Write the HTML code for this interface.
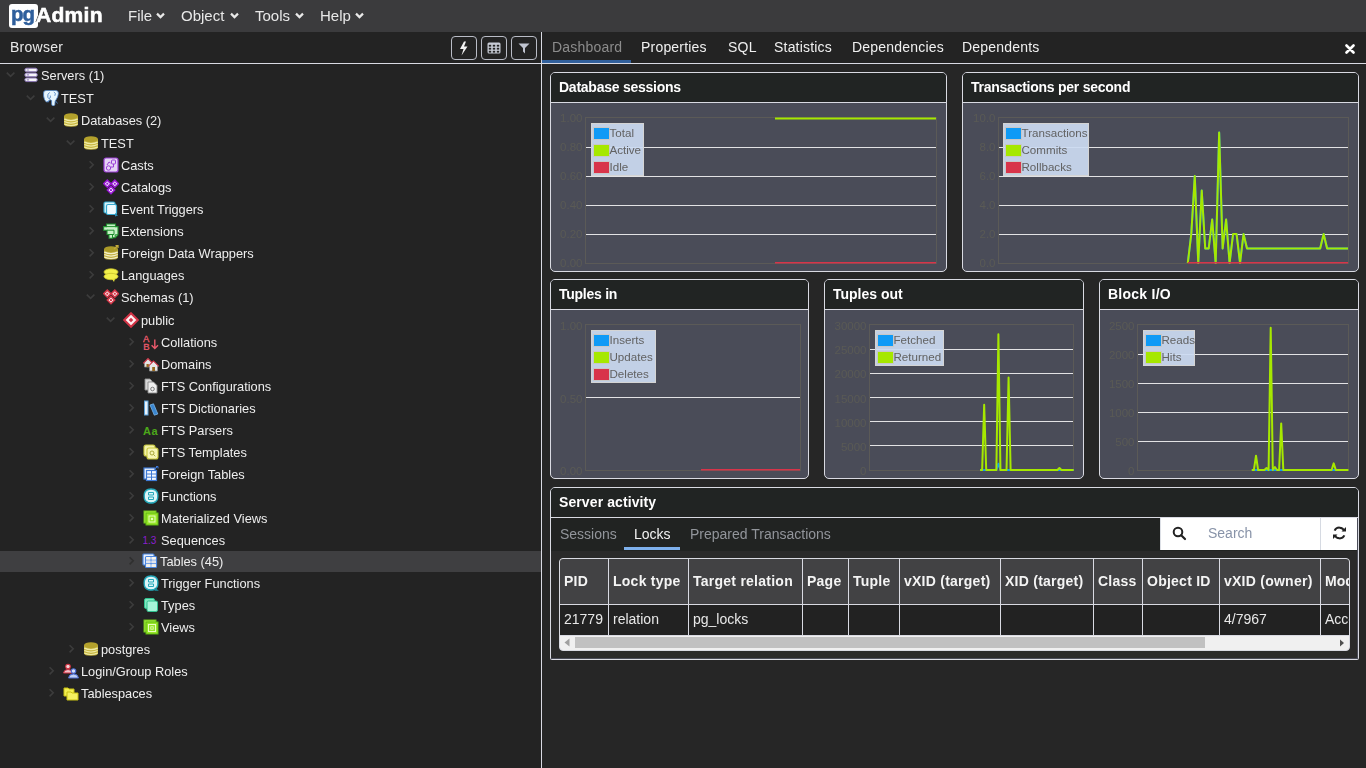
<!DOCTYPE html><html><head><meta charset="utf-8"><style>
*{box-sizing:border-box}
html,body{margin:0;padding:0;width:1366px;height:768px;overflow:hidden;background:#232323;font-family:"Liberation Sans",sans-serif}
.abs{position:absolute}
.t{position:absolute;white-space:nowrap;line-height:1;will-change:transform}
</style></head><body>
<div class="abs" style="left:0;top:0;width:1366px;height:32px;background:#3b3b3d"></div><div class="abs" style="left:9px;top:4px;width:29px;height:24px;background:#fff;border-radius:3px"></div><div class="t" style="left:11px;top:4px;font-size:20.5px;font-weight:700;color:#2f5f9c;letter-spacing:-1px;-webkit-text-stroke:0.5px #2f5f9c">pg</div><div class="t" style="left:36px;top:4px;font-size:21px;font-weight:700;color:#fff;letter-spacing:0.3px;-webkit-text-stroke:0.6px #fff;text-shadow:-1px 0 0 #333">Admin</div><div class="t" style="left:128px;top:8px;font-size:15px;color:#e8e8e8">File</div><svg class="abs" style="left:156px;top:12px" width="9" height="7" viewBox="0 0 9 7"><path d="M1 1.6 L4.5 5.1 L8 1.6" fill="none" stroke="#e8e8e8" stroke-width="2.2"/></svg><div class="t" style="left:181px;top:8px;font-size:15px;color:#e8e8e8">Object</div><svg class="abs" style="left:229.5px;top:12px" width="9" height="7" viewBox="0 0 9 7"><path d="M1 1.6 L4.5 5.1 L8 1.6" fill="none" stroke="#e8e8e8" stroke-width="2.2"/></svg><div class="t" style="left:255px;top:8px;font-size:15px;color:#e8e8e8">Tools</div><svg class="abs" style="left:294.5px;top:12px" width="9" height="7" viewBox="0 0 9 7"><path d="M1 1.6 L4.5 5.1 L8 1.6" fill="none" stroke="#e8e8e8" stroke-width="2.2"/></svg><div class="t" style="left:320px;top:8px;font-size:15px;color:#e8e8e8">Help</div><svg class="abs" style="left:355px;top:12px" width="9" height="7" viewBox="0 0 9 7"><path d="M1 1.6 L4.5 5.1 L8 1.6" fill="none" stroke="#e8e8e8" stroke-width="2.2"/></svg><div class="t" style="left:10px;top:40px;font-size:14px;letter-spacing:0.25px;color:#e8e8e8">Browser</div><div class="abs" style="left:0;top:63px;width:541px;height:1px;background:#d9dae3"></div><div class="abs" style="left:541px;top:32px;width:1px;height:736px;background:#d9dae3"></div><div class="abs" style="left:451px;top:36px;width:26px;height:24px;border:1px solid #b9bcc6;border-radius:4px"></div><div class="abs" style="left:481px;top:36px;width:26px;height:24px;border:1px solid #b9bcc6;border-radius:4px"></div><div class="abs" style="left:511px;top:36px;width:26px;height:24px;border:1px solid #b9bcc6;border-radius:4px"></div><svg class="abs" style="left:458px;top:41px" width="12" height="15" viewBox="0 0 12 15"><path d="M6 0.5 L2 8 L5.5 8 L3.5 14.5 L9.5 5.5 L6 5.5 L8 0.5 Z" fill="#f2f2f2"/></svg><svg class="abs" style="left:487px;top:42px" width="14" height="12" viewBox="0 0 14 12"><rect x="0.5" y="0.5" width="13" height="11" rx="1.5" fill="#c8ccd6"/><rect x="1.8" y="2.8" width="2.4" height="1.8" fill="#222"/><rect x="1.8" y="5.8" width="2.4" height="1.8" fill="#222"/><rect x="1.8" y="8.8" width="2.4" height="1.8" fill="#222"/><rect x="5.8" y="2.8" width="2.4" height="1.8" fill="#222"/><rect x="5.8" y="5.8" width="2.4" height="1.8" fill="#222"/><rect x="5.8" y="8.8" width="2.4" height="1.8" fill="#222"/><rect x="9.8" y="2.8" width="2.4" height="1.8" fill="#222"/><rect x="9.8" y="5.8" width="2.4" height="1.8" fill="#222"/><rect x="9.8" y="8.8" width="2.4" height="1.8" fill="#222"/></svg><svg class="abs" style="left:518px;top:43px" width="12" height="11" viewBox="0 0 12 11"><path d="M0.5 0.5 L11.5 0.5 L7 5 L7 10.5 L5 8.5 L5 5 Z" fill="#c0c4d0"/></svg><div class="abs" style="left:542px;top:60px;width:89px;height:3px;background:#31609c"></div><div class="abs" style="left:542px;top:63px;width:824px;height:1px;background:#d9dae3"></div><div class="t" style="left:552px;top:40px;font-size:14px;letter-spacing:0.2px;color:#8c8c8c">Dashboard</div><div class="t" style="left:641px;top:40px;font-size:14px;letter-spacing:0.2px;color:#f0f0f0">Properties</div><div class="t" style="left:728px;top:40px;font-size:14px;letter-spacing:0.2px;color:#f0f0f0">SQL</div><div class="t" style="left:774px;top:40px;font-size:14px;letter-spacing:0.2px;color:#f0f0f0">Statistics</div><div class="t" style="left:852px;top:40px;font-size:14px;letter-spacing:0.2px;color:#f0f0f0">Dependencies</div><div class="t" style="left:962px;top:40px;font-size:14px;letter-spacing:0.2px;color:#f0f0f0">Dependents</div><svg class="abs" style="left:1345px;top:44px" width="10" height="10" viewBox="0 0 10 10"><path d="M1.5 1.5 L8.5 8.5 M8.5 1.5 L1.5 8.5" stroke="#fff" stroke-width="2.6" stroke-linecap="round"/></svg><div class="abs" style="left:542px;top:64px;width:824px;height:704px;background:#262626"></div><svg class="abs" style="left:6px;top:71.2px" width="10" height="8" viewBox="0 0 10 8"><path d="M0.8 1.6 L4.6 5.4 L8.4 1.6" fill="none" stroke="#3c3c3c" stroke-width="1.6"/></svg><svg class="abs" style="left:23px;top:67px" width="16" height="16" viewBox="0 0 16 16"><rect x="1.8" y="1.2" width="12.5" height="3.6" rx="1.8" fill="#f6f6f8" stroke="#8a76b6" stroke-width="1"/><rect x="3.6" y="2.4" width="2.6" height="1.2" rx="0.6" fill="#9a8ac0"/><rect x="1.8" y="6.1000000000000005" width="12.5" height="3.6" rx="1.8" fill="#f6f6f8" stroke="#8a76b6" stroke-width="1"/><rect x="3.6" y="7.300000000000001" width="2.6" height="1.2" rx="0.6" fill="#9a8ac0"/><rect x="1.8" y="11.0" width="12.5" height="3.6" rx="1.8" fill="#f6f6f8" stroke="#8a76b6" stroke-width="1"/><rect x="3.6" y="12.200000000000001" width="2.6" height="1.2" rx="0.6" fill="#9a8ac0"/></svg><div class="t" style="left:41px;top:69.6px;font-size:12.8px;color:#eeeeee">Servers (1)</div><svg class="abs" style="left:26px;top:94.2px" width="10" height="8" viewBox="0 0 10 8"><path d="M0.8 1.6 L4.6 5.4 L8.4 1.6" fill="none" stroke="#3c3c3c" stroke-width="1.6"/></svg><svg class="abs" style="left:43px;top:90px" width="16" height="16" viewBox="0 0 16 16"><path d="M0.6 3 Q0.2 0.4 3.5 0.4 L12.5 0.4 Q15.6 0.4 15.4 3.5 Q15.2 7 12.8 10.2 L12.2 11 Q11.9 13 11.9 14.5 Q11.6 15.9 10.2 15.9 Q8.6 15.9 8.6 14 L8.6 10.5 Q7.5 10.2 6.9 9.5 Q5.5 12.2 3.6 11.9 Q1.2 11 0.6 6 Z" fill="#e6f5fd" stroke="#4a7fc2" stroke-width="0.8"/><path d="M6.8 2.5 Q4 3.5 4.8 7.2 Q5.5 9.2 7 8.2 Q7.8 7 7.2 5.5 M10.8 2 Q13.5 3 11.8 5.8 M12.5 10.8 L14.5 13.5 M6.5 10 L5 12.5" stroke="#4a7fc2" stroke-width="0.85" fill="none"/></svg><div class="t" style="left:61px;top:92.6px;font-size:12.8px;color:#eeeeee">TEST</div><svg class="abs" style="left:46px;top:116.2px" width="10" height="8" viewBox="0 0 10 8"><path d="M0.8 1.6 L4.6 5.4 L8.4 1.6" fill="none" stroke="#3c3c3c" stroke-width="1.6"/></svg><svg class="abs" style="left:63px;top:112px" width="16" height="16" viewBox="0 0 16 16"><path d="M1 4 L1 12.3 Q1 14.8 8 14.8 Q15 14.8 15 12.3 L15 4 Z" fill="#c6b53e"/><ellipse cx="8" cy="4.2" rx="7" ry="3" fill="#b3a12c"/><path d="M1.3 7.1 Q8 10.2 14.7 7.1" stroke="#efeaa6" stroke-width="1.2" fill="none"/><path d="M1.3 9.5 Q8 12.6 14.7 9.5" stroke="#efeaa6" stroke-width="1.2" fill="none"/><path d="M1.3 11.9 Q8 15 14.7 11.9" stroke="#efeaa6" stroke-width="1.1" fill="none"/></svg><div class="t" style="left:81px;top:114.6px;font-size:12.8px;color:#eeeeee">Databases (2)</div><svg class="abs" style="left:66px;top:139.20000000000002px" width="10" height="8" viewBox="0 0 10 8"><path d="M0.8 1.6 L4.6 5.4 L8.4 1.6" fill="none" stroke="#3c3c3c" stroke-width="1.6"/></svg><svg class="abs" style="left:83px;top:135px" width="16" height="16" viewBox="0 0 16 16"><path d="M1 4 L1 12.3 Q1 14.8 8 14.8 Q15 14.8 15 12.3 L15 4 Z" fill="#c6b53e"/><ellipse cx="8" cy="4.2" rx="7" ry="3" fill="#b3a12c"/><path d="M1.3 7.1 Q8 10.2 14.7 7.1" stroke="#efeaa6" stroke-width="1.2" fill="none"/><path d="M1.3 9.5 Q8 12.6 14.7 9.5" stroke="#efeaa6" stroke-width="1.2" fill="none"/><path d="M1.3 11.9 Q8 15 14.7 11.9" stroke="#efeaa6" stroke-width="1.1" fill="none"/></svg><div class="t" style="left:101px;top:137.6px;font-size:12.8px;color:#eeeeee">TEST</div><svg class="abs" style="left:88px;top:160.0px" width="8" height="10" viewBox="0 0 8 10"><path d="M1.6 1.2 L5.2 4.8 L1.6 8.4" fill="none" stroke="#3c3c3c" stroke-width="1.6"/></svg><svg class="abs" style="left:103px;top:157px" width="16" height="16" viewBox="0 0 16 16"><rect x="1" y="1" width="14" height="14" rx="2" fill="#e5d3f5" stroke="#9b3fd6" stroke-width="1.2"/><rect x="8.5" y="3" width="4" height="4" rx="1" fill="none" stroke="#9b3fd6" stroke-width="1"/><circle cx="5.5" cy="11" r="2.2" fill="none" stroke="#9b3fd6" stroke-width="1"/><path d="M10.5 7 L10.5 10 L8 10 M4 8 L6 5 L7.5 6" stroke="#9b3fd6" stroke-width="1" fill="none"/></svg><div class="t" style="left:121px;top:159.6px;font-size:12.8px;color:#eeeeee">Casts</div><svg class="abs" style="left:88px;top:182.0px" width="8" height="10" viewBox="0 0 8 10"><path d="M1.6 1.2 L5.2 4.8 L1.6 8.4" fill="none" stroke="#3c3c3c" stroke-width="1.6"/></svg><svg class="abs" style="left:103px;top:179px" width="16" height="16" viewBox="0 0 16 16"><path d="M4.3 1.1 L7.9 4.7 L4.3 8.3 L0.6999999999999997 4.7 Z" fill="#f4e6ff" stroke="#9614d2" stroke-width="1.5"/><rect x="3.3499999999999996" y="3.75" width="1.9" height="1.9" fill="#9614d2"/><path d="M11.8 1.1 L15.4 4.7 L11.8 8.3 L8.200000000000001 4.7 Z" fill="#f4e6ff" stroke="#9614d2" stroke-width="1.5"/><rect x="10.850000000000001" y="3.75" width="1.9" height="1.9" fill="#9614d2"/><path d="M8 7.3999999999999995 L11.7 11.1 L8 14.8 L4.3 11.1 Z" fill="#f4e6ff" stroke="#9614d2" stroke-width="1.5"/><rect x="7.05" y="10.15" width="1.9" height="1.9" fill="#9614d2"/></svg><div class="t" style="left:121px;top:181.6px;font-size:12.8px;color:#eeeeee">Catalogs</div><svg class="abs" style="left:88px;top:204.0px" width="8" height="10" viewBox="0 0 8 10"><path d="M1.6 1.2 L5.2 4.8 L1.6 8.4" fill="none" stroke="#3c3c3c" stroke-width="1.6"/></svg><svg class="abs" style="left:103px;top:201px" width="16" height="16" viewBox="0 0 16 16"><rect x="1" y="1" width="11" height="11" rx="1.5" fill="#d8f4fb" stroke="#36a9cf" stroke-width="1.2"/><rect x="3.5" y="3.5" width="10" height="10" rx="1.5" fill="#eefbff" stroke="#36a9cf" stroke-width="1.2"/><path d="M12 12 L15 14.5 L12 15.5 Z" fill="#2a8fb8"/></svg><div class="t" style="left:121px;top:203.6px;font-size:12.8px;color:#eeeeee">Event Triggers</div><svg class="abs" style="left:88px;top:226.0px" width="8" height="10" viewBox="0 0 8 10"><path d="M1.6 1.2 L5.2 4.8 L1.6 8.4" fill="none" stroke="#3c3c3c" stroke-width="1.6"/></svg><svg class="abs" style="left:103px;top:223px" width="16" height="16" viewBox="0 0 16 16"><path d="M3.5 1 L12.5 1 L12.5 3.6 L15 3.6 L15 11.8 L12.2 14.8 L9.5 14.8 L9.5 15.3 L6 15.3 L6 11.5 L4 11.5 L4 7.2 L0.6 7.2 L0.6 3.6 L3.5 3.6 Z" fill="#c8f1c8" stroke="#1f8f2e" stroke-width="1.1"/><path d="M3.5 3.6 L12.5 3.6 M4 7.2 L11 7.2 L11 11.5 L6 11.5 M9.5 11.5 L9.5 14.8 M12.2 14.8 L12.2 11.8 L15 11.8" stroke="#1f8f2e" stroke-width="1" fill="none"/></svg><div class="t" style="left:121px;top:225.6px;font-size:12.8px;color:#eeeeee">Extensions</div><svg class="abs" style="left:88px;top:248.0px" width="8" height="10" viewBox="0 0 8 10"><path d="M1.6 1.2 L5.2 4.8 L1.6 8.4" fill="none" stroke="#3c3c3c" stroke-width="1.6"/></svg><svg class="abs" style="left:103px;top:245px" width="16" height="16" viewBox="0 0 16 16"><path d="M1 4 L1 12.3 Q1 14.8 8 14.8 Q15 14.8 15 12.3 L15 4 Z" fill="#c0ae3e"/><ellipse cx="8" cy="4.2" rx="7" ry="3" fill="#ab9a28"/><path d="M1.3 7.1 Q8 10.2 14.7 7.1" stroke="#f4f0c8" stroke-width="1.2" fill="none"/><path d="M1.3 9.5 Q8 12.6 14.7 9.5" stroke="#f4f0c8" stroke-width="1.2" fill="none"/><path d="M1.3 11.9 Q8 15 14.7 11.9" stroke="#f4f0c8" stroke-width="1.1" fill="none"/><path d="M11 4 L15 0.5 M12.5 0.5 L15 0.5 L15 3" stroke="#c0a83a" stroke-width="1.3" fill="none"/></svg><div class="t" style="left:121px;top:247.6px;font-size:12.8px;color:#eeeeee">Foreign Data Wrappers</div><svg class="abs" style="left:88px;top:270.0px" width="8" height="10" viewBox="0 0 8 10"><path d="M1.6 1.2 L5.2 4.8 L1.6 8.4" fill="none" stroke="#3c3c3c" stroke-width="1.6"/></svg><svg class="abs" style="left:103px;top:267px" width="16" height="16" viewBox="0 0 16 16"><ellipse cx="8" cy="5" rx="7" ry="3.2" fill="#f2f04a" stroke="#c8c22a" stroke-width="0.8"/><ellipse cx="8" cy="9.5" rx="7" ry="3.2" fill="#f2f04a" stroke="#c8c22a" stroke-width="0.8"/><path d="M9 12 L11 15 L12 11.5 Z" fill="#e6e23a"/></svg><div class="t" style="left:121px;top:269.6px;font-size:12.8px;color:#eeeeee">Languages</div><svg class="abs" style="left:86px;top:293.2px" width="10" height="8" viewBox="0 0 10 8"><path d="M0.8 1.6 L4.6 5.4 L8.4 1.6" fill="none" stroke="#3c3c3c" stroke-width="1.6"/></svg><svg class="abs" style="left:103px;top:289px" width="16" height="16" viewBox="0 0 16 16"><path d="M4.3 1.1 L7.9 4.7 L4.3 8.3 L0.6999999999999997 4.7 Z" fill="#fde8ea" stroke="#d23446" stroke-width="1.5"/><rect x="3.3499999999999996" y="3.75" width="1.9" height="1.9" fill="#d23446"/><path d="M11.8 1.1 L15.4 4.7 L11.8 8.3 L8.200000000000001 4.7 Z" fill="#fde8ea" stroke="#d23446" stroke-width="1.5"/><rect x="10.850000000000001" y="3.75" width="1.9" height="1.9" fill="#d23446"/><path d="M8 7.3999999999999995 L11.7 11.1 L8 14.8 L4.3 11.1 Z" fill="#fde8ea" stroke="#d23446" stroke-width="1.5"/><rect x="7.05" y="10.15" width="1.9" height="1.9" fill="#d23446"/></svg><div class="t" style="left:121px;top:291.6px;font-size:12.8px;color:#eeeeee">Schemas (1)</div><svg class="abs" style="left:106px;top:316.2px" width="10" height="8" viewBox="0 0 10 8"><path d="M0.8 1.6 L4.6 5.4 L8.4 1.6" fill="none" stroke="#3c3c3c" stroke-width="1.6"/></svg><svg class="abs" style="left:123px;top:312px" width="16" height="16" viewBox="0 0 16 16"><path d="M8 1.2 L14.8 8 L8 14.8 L1.2 8 Z" fill="#fff0f2" stroke="#d23446" stroke-width="2"/><rect x="6.4" y="6.4" width="3.2" height="3.2" fill="#d23446" transform="rotate(45 8 8)"/></svg><div class="t" style="left:141px;top:314.6px;font-size:12.8px;color:#eeeeee">public</div><svg class="abs" style="left:128px;top:337.0px" width="8" height="10" viewBox="0 0 8 10"><path d="M1.6 1.2 L5.2 4.8 L1.6 8.4" fill="none" stroke="#3c3c3c" stroke-width="1.6"/></svg><svg class="abs" style="left:143px;top:334px" width="16" height="16" viewBox="0 0 16 16"><text x="0" y="8" font-family="Liberation Sans" font-size="9.5" fill="#ea5a6c" stroke="#ea5a6c" stroke-width="0.3">A</text><text x="0.3" y="16" font-family="Liberation Sans" font-size="9.5" fill="#ea5a6c" stroke="#ea5a6c" stroke-width="0.3">B</text><path d="M11.8 5.5 L11.8 14.5 M8.6 11.2 L11.8 14.5 L15 11.2" stroke="#ea5a6c" stroke-width="1.4" fill="none"/></svg><div class="t" style="left:161px;top:336.6px;font-size:12.8px;color:#eeeeee">Collations</div><svg class="abs" style="left:128px;top:359.0px" width="8" height="10" viewBox="0 0 8 10"><path d="M1.6 1.2 L5.2 4.8 L1.6 8.4" fill="none" stroke="#3c3c3c" stroke-width="1.6"/></svg><svg class="abs" style="left:143px;top:356px" width="16" height="16" viewBox="0 0 16 16"><path d="M1.5 7 L1.5 11 L8.5 11 L8.5 7" fill="#e4e4e4" stroke="#8a8a8a" stroke-width="0.8"/><path d="M0.3 7.3 L5 2.5 L9.7 7.3" fill="#e4e4e4" stroke="#cc3344" stroke-width="1.1"/><path d="M6.5 10 L6.5 15 L14.5 15 L14.5 10" fill="#e8e8e8" stroke="#8a8a8a" stroke-width="0.8"/><path d="M5.3 10.3 L10.5 5 L15.7 10.3" fill="#e8e8e8" stroke="#cc3344" stroke-width="1.2"/><path d="M6.5 10 L10.5 6 L14.5 10 Z" fill="#e8e8e8"/><rect x="9.2" y="11" width="2.8" height="4" fill="#9a6a20"/><rect x="3.5" y="8" width="2.3" height="3" fill="#9a6a20"/></svg><div class="t" style="left:161px;top:358.6px;font-size:12.8px;color:#eeeeee">Domains</div><svg class="abs" style="left:128px;top:381.0px" width="8" height="10" viewBox="0 0 8 10"><path d="M1.6 1.2 L5.2 4.8 L1.6 8.4" fill="none" stroke="#3c3c3c" stroke-width="1.6"/></svg><svg class="abs" style="left:143px;top:378px" width="16" height="16" viewBox="0 0 16 16"><path d="M2 1 L7 1 L9 3 L9 12 L2 12 Z" fill="#d8d8d8" stroke="#909090" stroke-width="0.9"/><path d="M5 4 L10.5 4 L14 7.5 L14 15 L5 15 Z" fill="#eeeeee" stroke="#8a8a8a" stroke-width="0.9"/><circle cx="9.5" cy="11" r="1.8" fill="none" stroke="#707070" stroke-width="0.9"/></svg><div class="t" style="left:161px;top:380.6px;font-size:12.8px;color:#eeeeee">FTS Configurations</div><svg class="abs" style="left:128px;top:403.0px" width="8" height="10" viewBox="0 0 8 10"><path d="M1.6 1.2 L5.2 4.8 L1.6 8.4" fill="none" stroke="#3c3c3c" stroke-width="1.6"/></svg><svg class="abs" style="left:143px;top:400px" width="16" height="16" viewBox="0 0 16 16"><rect x="1.5" y="1" width="3.5" height="14" fill="#e8f2fb" stroke="#5aa0d8" stroke-width="1"/><path d="M7 5 L10.5 3.8 L14.8 14 L11.3 15.2 Z" fill="#3a86d0" stroke="#7ab6ea" stroke-width="0.8"/></svg><div class="t" style="left:161px;top:402.6px;font-size:12.8px;color:#eeeeee">FTS Dictionaries</div><svg class="abs" style="left:128px;top:425.0px" width="8" height="10" viewBox="0 0 8 10"><path d="M1.6 1.2 L5.2 4.8 L1.6 8.4" fill="none" stroke="#3c3c3c" stroke-width="1.6"/></svg><svg class="abs" style="left:143px;top:422px" width="16" height="16" viewBox="0 0 16 16"><text x="0" y="12.5" font-family="Liberation Sans" font-weight="bold" font-size="11" letter-spacing="0.6" fill="#4ca81a">Aa</text></svg><div class="t" style="left:161px;top:424.6px;font-size:12.8px;color:#eeeeee">FTS Parsers</div><svg class="abs" style="left:128px;top:447.0px" width="8" height="10" viewBox="0 0 8 10"><path d="M1.6 1.2 L5.2 4.8 L1.6 8.4" fill="none" stroke="#3c3c3c" stroke-width="1.6"/></svg><svg class="abs" style="left:143px;top:444px" width="16" height="16" viewBox="0 0 16 16"><rect x="1" y="1" width="11" height="11" rx="2" fill="#f3f2a8" stroke="#c8c83c" stroke-width="1.1"/><rect x="4" y="4" width="11" height="11" rx="2" fill="#f6f5b6" stroke="#c8c83c" stroke-width="1.1"/><circle cx="9" cy="9" r="2" fill="none" stroke="#a0a030" stroke-width="0.9"/><path d="M10.4 10.4 L12.3 12.3" stroke="#a0a030" stroke-width="0.9"/></svg><div class="t" style="left:161px;top:446.6px;font-size:12.8px;color:#eeeeee">FTS Templates</div><svg class="abs" style="left:128px;top:469.0px" width="8" height="10" viewBox="0 0 8 10"><path d="M1.6 1.2 L5.2 4.8 L1.6 8.4" fill="none" stroke="#3c3c3c" stroke-width="1.6"/></svg><svg class="abs" style="left:143px;top:466px" width="16" height="16" viewBox="0 0 16 16"><rect x="1" y="2" width="11" height="11" fill="#eef4fc" stroke="#3f7ad6" stroke-width="1.2"/><rect x="3.5" y="4.5" width="10" height="10" fill="#f4f8fe" stroke="#3f7ad6" stroke-width="1.2"/><path d="M3.5 8 L13.5 8 M3.5 11.2 L13.5 11.2 M8.5 4.5 L8.5 14.5" stroke="#3f7ad6" stroke-width="1"/><path d="M11.5 3 L15 0.5 M13 0.5 L15 0.5 L15 2.5" stroke="#3f7ad6" stroke-width="1"/></svg><div class="t" style="left:161px;top:468.6px;font-size:12.8px;color:#eeeeee">Foreign Tables</div><svg class="abs" style="left:128px;top:491.0px" width="8" height="10" viewBox="0 0 8 10"><path d="M1.6 1.2 L5.2 4.8 L1.6 8.4" fill="none" stroke="#3c3c3c" stroke-width="1.6"/></svg><svg class="abs" style="left:143px;top:488px" width="16" height="16" viewBox="0 0 16 16"><path d="M5 1.5 Q8 0.5 11 1.5 Q15 3 14.8 8 Q15 13 11 14.5 Q8 15.5 5 14.5 Q1 13 1.2 8 Q1 3 5 1.5 Z" fill="#dcf5f8" stroke="#25a9bb" stroke-width="1.4"/><path d="M5.5 4.5 L10.5 4.5 L10.5 7 L5.5 7 Z M5.5 9 L10.5 9 L10.5 11.5 L5.5 11.5 Z" fill="none" stroke="#25a9bb" stroke-width="1"/></svg><div class="t" style="left:161px;top:490.6px;font-size:12.8px;color:#eeeeee">Functions</div><svg class="abs" style="left:128px;top:513.0px" width="8" height="10" viewBox="0 0 8 10"><path d="M1.6 1.2 L5.2 4.8 L1.6 8.4" fill="none" stroke="#3c3c3c" stroke-width="1.6"/></svg><svg class="abs" style="left:143px;top:510px" width="16" height="16" viewBox="0 0 16 16"><rect x="1" y="1" width="12" height="12" fill="#a6ec3a" stroke="#6fc21a" stroke-width="1"/><rect x="3" y="3" width="12" height="12" fill="#98e42a" stroke="#5cb80e" stroke-width="1"/><rect x="6" y="6" width="6" height="6" fill="none" stroke="#e8ffc0" stroke-width="1"/><circle cx="9" cy="9" r="1.2" fill="#e8ffc0"/></svg><div class="t" style="left:161px;top:512.6px;font-size:12.8px;color:#eeeeee">Materialized Views</div><svg class="abs" style="left:128px;top:535.0px" width="8" height="10" viewBox="0 0 8 10"><path d="M1.6 1.2 L5.2 4.8 L1.6 8.4" fill="none" stroke="#3c3c3c" stroke-width="1.6"/></svg><svg class="abs" style="left:143px;top:532px" width="16" height="16" viewBox="0 0 16 16"><text x="-0.5" y="12" font-family="Liberation Sans" font-size="10" fill="#8a1fd0">1.3</text></svg><div class="t" style="left:161px;top:534.6px;font-size:12.8px;color:#eeeeee">Sequences</div><div class="abs" style="left:0;top:551px;width:541px;height:21px;background:#3f3f41"></div><svg class="abs" style="left:128px;top:556.0px" width="8" height="10" viewBox="0 0 8 10"><path d="M1.6 1.2 L5.2 4.8 L1.6 8.4" fill="none" stroke="#2f2f2f" stroke-width="1.6"/></svg><svg class="abs" style="left:142px;top:553px" width="16" height="16" viewBox="0 0 16 16"><rect x="1" y="1" width="11" height="11" rx="1" fill="#e8f0fc" stroke="#4a86e0" stroke-width="1.2"/><rect x="3.5" y="3.5" width="11" height="11" rx="1" fill="#f2f6fc" stroke="#4a86e0" stroke-width="1.2"/><path d="M3.5 7 L14.5 7 M3.5 10.7 L14.5 10.7 M9 3.5 L9 14.5" stroke="#4a86e0" stroke-width="1"/><rect x="4.2" y="4.2" width="4.2" height="2.3" fill="#fbf6ea"/><rect x="9.6" y="4.2" width="4.2" height="2.3" fill="#fbf6ea"/><rect x="4.2" y="7.6" width="4.2" height="2.5" fill="#e2e4ea"/><rect x="9.6" y="7.6" width="4.2" height="2.5" fill="#e2e4ea"/><rect x="4.2" y="11.3" width="4.2" height="2.6" fill="#f4f0e6"/><rect x="9.6" y="11.3" width="4.2" height="2.6" fill="#f4f0e6"/></svg><div class="t" style="left:160px;top:555.6px;font-size:12.8px;color:#eeeeee">Tables (45)</div><svg class="abs" style="left:128px;top:578.0px" width="8" height="10" viewBox="0 0 8 10"><path d="M1.6 1.2 L5.2 4.8 L1.6 8.4" fill="none" stroke="#3c3c3c" stroke-width="1.6"/></svg><svg class="abs" style="left:143px;top:575px" width="16" height="16" viewBox="0 0 16 16"><path d="M5 1.5 Q8 0.5 11 1.5 Q15 3 14.8 8 Q15 13 11 14.5 Q8 15.5 5 14.5 Q1 13 1.2 8 Q1 3 5 1.5 Z" fill="#dcf5f8" stroke="#25a9bb" stroke-width="1.4"/><path d="M5.5 4.5 L10.5 4.5 L10.5 7 L5.5 7 Z M5.5 9 L10.5 9 L10.5 11.5 L5.5 11.5 Z" fill="none" stroke="#25a9bb" stroke-width="1"/><path d="M12 12.5 L15.8 15.8 L11.5 15.8 Z" fill="#1b8d9e"/></svg><div class="t" style="left:161px;top:577.6px;font-size:12.8px;color:#eeeeee">Trigger Functions</div><svg class="abs" style="left:128px;top:600.0px" width="8" height="10" viewBox="0 0 8 10"><path d="M1.6 1.2 L5.2 4.8 L1.6 8.4" fill="none" stroke="#3c3c3c" stroke-width="1.6"/></svg><svg class="abs" style="left:143px;top:597px" width="16" height="16" viewBox="0 0 16 16"><rect x="1.5" y="1.5" width="10" height="10" rx="1.5" fill="#7fe8c0" stroke="#2fc08e" stroke-width="1"/><rect x="4" y="4" width="10.5" height="10.5" rx="1.5" fill="#a6f4d8" stroke="#2fc08e" stroke-width="1"/></svg><div class="t" style="left:161px;top:599.6px;font-size:12.8px;color:#eeeeee">Types</div><svg class="abs" style="left:128px;top:622.0px" width="8" height="10" viewBox="0 0 8 10"><path d="M1.6 1.2 L5.2 4.8 L1.6 8.4" fill="none" stroke="#3c3c3c" stroke-width="1.6"/></svg><svg class="abs" style="left:143px;top:619px" width="16" height="16" viewBox="0 0 16 16"><rect x="1" y="1" width="12" height="12" fill="#a6ec3a" stroke="#6fc21a" stroke-width="1"/><rect x="3" y="3" width="12" height="12" fill="#98e42a" stroke="#5cb80e" stroke-width="1"/><rect x="5.5" y="5.5" width="7" height="7" fill="none" stroke="#e8ffc0" stroke-width="1"/><rect x="7.8" y="7.8" width="2.4" height="2.4" fill="none" stroke="#e8ffc0" stroke-width="0.8"/></svg><div class="t" style="left:161px;top:621.6px;font-size:12.8px;color:#eeeeee">Views</div><svg class="abs" style="left:68px;top:644.0px" width="8" height="10" viewBox="0 0 8 10"><path d="M1.6 1.2 L5.2 4.8 L1.6 8.4" fill="none" stroke="#3c3c3c" stroke-width="1.6"/></svg><svg class="abs" style="left:83px;top:641px" width="16" height="16" viewBox="0 0 16 16"><path d="M1 4 L1 12.3 Q1 14.8 8 14.8 Q15 14.8 15 12.3 L15 4 Z" fill="#c6b53e"/><ellipse cx="8" cy="4.2" rx="7" ry="3" fill="#b3a12c"/><path d="M1.3 7.1 Q8 10.2 14.7 7.1" stroke="#efeaa6" stroke-width="1.2" fill="none"/><path d="M1.3 9.5 Q8 12.6 14.7 9.5" stroke="#efeaa6" stroke-width="1.2" fill="none"/><path d="M1.3 11.9 Q8 15 14.7 11.9" stroke="#efeaa6" stroke-width="1.1" fill="none"/></svg><div class="t" style="left:101px;top:643.6px;font-size:12.8px;color:#eeeeee">postgres</div><svg class="abs" style="left:48px;top:666.0px" width="8" height="10" viewBox="0 0 8 10"><path d="M1.6 1.2 L5.2 4.8 L1.6 8.4" fill="none" stroke="#3c3c3c" stroke-width="1.6"/></svg><svg class="abs" style="left:63px;top:663px" width="16" height="16" viewBox="0 0 16 16"><circle cx="5" cy="3.5" r="2.3" fill="#f4d4d8" stroke="#d03040" stroke-width="1.1"/><path d="M0.5 10 Q1 6.5 5 6.5 Q9 6.5 9.5 10 Z" fill="#f0c0c8" stroke="#d03040" stroke-width="1"/><circle cx="10.5" cy="8" r="2.3" fill="#d4e0f8" stroke="#4a6ad0" stroke-width="1.1"/><path d="M5.5 15 Q6 11 10.5 11 Q15 11 15.5 15 Z" fill="#c0d0f4" stroke="#4a6ad0" stroke-width="1"/></svg><div class="t" style="left:81px;top:665.6px;font-size:12.8px;color:#eeeeee">Login/Group Roles</div><svg class="abs" style="left:48px;top:688.0px" width="8" height="10" viewBox="0 0 8 10"><path d="M1.6 1.2 L5.2 4.8 L1.6 8.4" fill="none" stroke="#3c3c3c" stroke-width="1.6"/></svg><svg class="abs" style="left:63px;top:685px" width="16" height="16" viewBox="0 0 16 16"><path d="M1 3 L5 3 L6 4 L11 4 L11 11 L1 11 Z" fill="#f2ee50" stroke="#c8c010" stroke-width="1"/><path d="M4 7 L8 7 L9 8 L15 8 L15 15 L4 15 Z" fill="#f4f060" stroke="#c8c010" stroke-width="1"/></svg><div class="t" style="left:81px;top:687.6px;font-size:12.8px;color:#eeeeee">Tablespaces</div><div class="abs" style="left:550px;top:72px;width:397px;height:200px;border:1px solid #d9dae2;border-radius:5px;background:#4a4c58;overflow:hidden"><div class="abs" style="left:0;top:0;width:395px;height:29px;background:#212423;border-bottom:0"></div><div class="abs" style="left:0;top:29px;width:395px;height:1px;background:#d9dae2"></div></div><div class="t" style="left:559px;top:80px;font-size:14px;letter-spacing:-0.25px;font-weight:700;color:#ffffff">Database sessions</div><div class="abs" style="left:962px;top:72px;width:397px;height:200px;border:1px solid #d9dae2;border-radius:5px;background:#4a4c58;overflow:hidden"><div class="abs" style="left:0;top:0;width:395px;height:29px;background:#212423;border-bottom:0"></div><div class="abs" style="left:0;top:29px;width:395px;height:1px;background:#d9dae2"></div></div><div class="t" style="left:971px;top:80px;font-size:14px;letter-spacing:-0.25px;font-weight:700;color:#ffffff">Transactions per second</div><div class="abs" style="left:550px;top:279px;width:259px;height:200px;border:1px solid #d9dae2;border-radius:5px;background:#4a4c58;overflow:hidden"><div class="abs" style="left:0;top:0;width:257px;height:29px;background:#212423;border-bottom:0"></div><div class="abs" style="left:0;top:29px;width:257px;height:1px;background:#d9dae2"></div></div><div class="t" style="left:559px;top:287px;font-size:14px;letter-spacing:-0.25px;font-weight:700;color:#ffffff">Tuples in</div><div class="abs" style="left:824px;top:279px;width:260px;height:200px;border:1px solid #d9dae2;border-radius:5px;background:#4a4c58;overflow:hidden"><div class="abs" style="left:0;top:0;width:258px;height:29px;background:#212423;border-bottom:0"></div><div class="abs" style="left:0;top:29px;width:258px;height:1px;background:#d9dae2"></div></div><div class="t" style="left:833px;top:287px;font-size:14px;letter-spacing:0.0px;font-weight:700;color:#ffffff">Tuples out</div><div class="abs" style="left:1099px;top:279px;width:260px;height:200px;border:1px solid #d9dae2;border-radius:5px;background:#4a4c58;overflow:hidden"><div class="abs" style="left:0;top:0;width:258px;height:29px;background:#212423;border-bottom:0"></div><div class="abs" style="left:0;top:29px;width:258px;height:1px;background:#d9dae2"></div></div><div class="t" style="left:1108px;top:287px;font-size:14px;letter-spacing:0.25px;font-weight:700;color:#ffffff">Block I/O</div><svg class="abs" style="left:0;top:0" width="1366" height="768" viewBox="0 0 1366 768"><text x="582.5" y="122" text-anchor="end" font-family="Liberation Sans" font-size="11.5" fill="#5a5a55">1.00</text><text x="582.5" y="151" text-anchor="end" font-family="Liberation Sans" font-size="11.5" fill="#5a5a55">0.80</text><text x="582.5" y="180" text-anchor="end" font-family="Liberation Sans" font-size="11.5" fill="#5a5a55">0.60</text><text x="582.5" y="209" text-anchor="end" font-family="Liberation Sans" font-size="11.5" fill="#5a5a55">0.40</text><text x="582.5" y="238" text-anchor="end" font-family="Liberation Sans" font-size="11.5" fill="#5a5a55">0.20</text><text x="582.5" y="267" text-anchor="end" font-family="Liberation Sans" font-size="11.5" fill="#5a5a55">0.00</text><line x1="585" y1="147.5" x2="936" y2="147.5" stroke="#e2e2e4" stroke-width="1.1"/><line x1="585" y1="176.5" x2="936" y2="176.5" stroke="#e2e2e4" stroke-width="1.1"/><line x1="585" y1="205.5" x2="936" y2="205.5" stroke="#e2e2e4" stroke-width="1.1"/><line x1="585" y1="234.5" x2="936" y2="234.5" stroke="#e2e2e4" stroke-width="1.1"/><rect x="585.5" y="117.5" width="351" height="146" fill="none" stroke="#5b5a57" stroke-width="1"/><polyline points="775,262.8 936,262.8" fill="none" stroke="#d8344a" stroke-width="1.6" stroke-linejoin="round"/><polyline points="775,118.4 936,118.4" fill="none" stroke="#a6e800" stroke-width="2" stroke-linejoin="round"/><rect x="591.5" y="123.5" width="52" height="52" fill="#ccdbf2" fill-opacity="0.92" stroke="#d4d4d4" stroke-width="1"/><rect x="593.5" y="127.5" width="16" height="12" fill="#d0d8e4" stroke="#c8c8c8" stroke-width="1"/><rect x="594" y="128" width="15" height="11" fill="#0f9af6"/><text x="609.5" y="136.8" font-family="Liberation Sans" font-size="11.6" fill="#626262">Total</text><rect x="593.5" y="144.5" width="16" height="12" fill="#d0d8e4" stroke="#c8c8c8" stroke-width="1"/><rect x="594" y="145" width="15" height="11" fill="#a6e800"/><text x="609.5" y="153.8" font-family="Liberation Sans" font-size="11.6" fill="#626262">Active</text><rect x="593.5" y="161.5" width="16" height="12" fill="#d0d8e4" stroke="#c8c8c8" stroke-width="1"/><rect x="594" y="162" width="15" height="11" fill="#d8344a"/><text x="609.5" y="170.8" font-family="Liberation Sans" font-size="11.6" fill="#626262">Idle</text><text x="995.5" y="122" text-anchor="end" font-family="Liberation Sans" font-size="11.5" fill="#5a5a55">10.0</text><text x="995.5" y="151" text-anchor="end" font-family="Liberation Sans" font-size="11.5" fill="#5a5a55">8.0</text><text x="995.5" y="180" text-anchor="end" font-family="Liberation Sans" font-size="11.5" fill="#5a5a55">6.0</text><text x="995.5" y="209" text-anchor="end" font-family="Liberation Sans" font-size="11.5" fill="#5a5a55">4.0</text><text x="995.5" y="238" text-anchor="end" font-family="Liberation Sans" font-size="11.5" fill="#5a5a55">2.0</text><text x="995.5" y="267" text-anchor="end" font-family="Liberation Sans" font-size="11.5" fill="#5a5a55">0.0</text><line x1="998" y1="147.5" x2="1348" y2="147.5" stroke="#e2e2e4" stroke-width="1.1"/><line x1="998" y1="176.5" x2="1348" y2="176.5" stroke="#e2e2e4" stroke-width="1.1"/><line x1="998" y1="205.5" x2="1348" y2="205.5" stroke="#e2e2e4" stroke-width="1.1"/><line x1="998" y1="234.5" x2="1348" y2="234.5" stroke="#e2e2e4" stroke-width="1.1"/><rect x="998.5" y="117.5" width="350" height="146" fill="none" stroke="#5b5a57" stroke-width="1"/><polyline points="1187.8,263.0 1191.283,234.0 1194.7659999999998,176.0 1198.249,263.0 1201.732,190.5 1205.215,248.5 1208.6979999999999,248.5 1212.181,219.5 1215.664,263.0 1219.147,132.5 1222.6299999999999,248.5 1226.113,219.5 1229.596,263.0 1233.079,234.0 1236.562,234.0 1240.045,263.0 1243.528,234.0 1247.011,248.5 1250.494,248.5 1253.9769999999999,248.5 1257.46,248.5 1260.943,248.5 1264.426,248.5 1267.9089999999999,248.5 1271.392,248.5 1274.875,248.5 1278.358,248.5 1281.841,248.5 1285.324,248.5 1288.807,248.5 1292.29,248.5 1295.773,248.5 1299.2559999999999,248.5 1302.739,248.5 1306.222,248.5 1309.705,248.5 1313.1879999999999,248.5 1316.671,248.5 1320.154,248.5 1323.637,234.0 1327.12,248.5 1330.603,248.5 1334.086,248.5 1337.569,248.5 1341.052,248.5 1344.5349999999999,248.5 1348.018,248.5" fill="none" stroke="#0f9af6" stroke-width="2" stroke-linejoin="round"/><polyline points="1187.8,263.0 1191.283,234.0 1194.7659999999998,176.0 1198.249,263.0 1201.732,190.5 1205.215,248.5 1208.6979999999999,248.5 1212.181,219.5 1215.664,263.0 1219.147,132.5 1222.6299999999999,248.5 1226.113,219.5 1229.596,263.0 1233.079,234.0 1236.562,234.0 1240.045,263.0 1243.528,234.0 1247.011,248.5 1250.494,248.5 1253.9769999999999,248.5 1257.46,248.5 1260.943,248.5 1264.426,248.5 1267.9089999999999,248.5 1271.392,248.5 1274.875,248.5 1278.358,248.5 1281.841,248.5 1285.324,248.5 1288.807,248.5 1292.29,248.5 1295.773,248.5 1299.2559999999999,248.5 1302.739,248.5 1306.222,248.5 1309.705,248.5 1313.1879999999999,248.5 1316.671,248.5 1320.154,248.5 1323.637,234.0 1327.12,248.5 1330.603,248.5 1334.086,248.5 1337.569,248.5 1341.052,248.5 1344.5349999999999,248.5 1348.018,248.5" fill="none" stroke="#a6e800" stroke-width="2" stroke-linejoin="round"/><polyline points="1187.8,262.8 1348,262.8" fill="none" stroke="#d8344a" stroke-width="1.6" stroke-linejoin="round"/><rect x="1003.5" y="123.5" width="85" height="52" fill="#ccdbf2" fill-opacity="0.92" stroke="#d4d4d4" stroke-width="1"/><rect x="1005.5" y="127.5" width="16" height="12" fill="#d0d8e4" stroke="#c8c8c8" stroke-width="1"/><rect x="1006" y="128" width="15" height="11" fill="#0f9af6"/><text x="1021.5" y="136.8" font-family="Liberation Sans" font-size="11.6" fill="#626262">Transactions</text><rect x="1005.5" y="144.5" width="16" height="12" fill="#d0d8e4" stroke="#c8c8c8" stroke-width="1"/><rect x="1006" y="145" width="15" height="11" fill="#a6e800"/><text x="1021.5" y="153.8" font-family="Liberation Sans" font-size="11.6" fill="#626262">Commits</text><rect x="1005.5" y="161.5" width="16" height="12" fill="#d0d8e4" stroke="#c8c8c8" stroke-width="1"/><rect x="1006" y="162" width="15" height="11" fill="#d8344a"/><text x="1021.5" y="170.8" font-family="Liberation Sans" font-size="11.6" fill="#626262">Rollbacks</text><text x="582.5" y="330" text-anchor="end" font-family="Liberation Sans" font-size="11.5" fill="#5a5a55">1.00</text><text x="582.5" y="402.5" text-anchor="end" font-family="Liberation Sans" font-size="11.5" fill="#5a5a55">0.50</text><text x="582.5" y="475" text-anchor="end" font-family="Liberation Sans" font-size="11.5" fill="#5a5a55">0.00</text><line x1="585" y1="397.5" x2="800" y2="397.5" stroke="#e2e2e4" stroke-width="1.1"/><rect x="585.5" y="324.5" width="215" height="146" fill="none" stroke="#5b5a57" stroke-width="1"/><polyline points="701,469.8 800,469.8" fill="none" stroke="#d8344a" stroke-width="1.6" stroke-linejoin="round"/><rect x="591.5" y="330.5" width="64" height="52" fill="#ccdbf2" fill-opacity="0.92" stroke="#d4d4d4" stroke-width="1"/><rect x="593.5" y="334.5" width="16" height="12" fill="#d0d8e4" stroke="#c8c8c8" stroke-width="1"/><rect x="594" y="335" width="15" height="11" fill="#0f9af6"/><text x="609.5" y="343.8" font-family="Liberation Sans" font-size="11.6" fill="#626262">Inserts</text><rect x="593.5" y="351.5" width="16" height="12" fill="#d0d8e4" stroke="#c8c8c8" stroke-width="1"/><rect x="594" y="352" width="15" height="11" fill="#a6e800"/><text x="609.5" y="360.8" font-family="Liberation Sans" font-size="11.6" fill="#626262">Updates</text><rect x="593.5" y="368.5" width="16" height="12" fill="#d0d8e4" stroke="#c8c8c8" stroke-width="1"/><rect x="594" y="369" width="15" height="11" fill="#d8344a"/><text x="609.5" y="377.8" font-family="Liberation Sans" font-size="11.6" fill="#626262">Deletes</text><text x="866.5" y="330" text-anchor="end" font-family="Liberation Sans" font-size="11.5" fill="#5a5a55">30000</text><text x="866.5" y="354.2" text-anchor="end" font-family="Liberation Sans" font-size="11.5" fill="#5a5a55">25000</text><text x="866.5" y="378.3" text-anchor="end" font-family="Liberation Sans" font-size="11.5" fill="#5a5a55">20000</text><text x="866.5" y="402.5" text-anchor="end" font-family="Liberation Sans" font-size="11.5" fill="#5a5a55">15000</text><text x="866.5" y="426.6" text-anchor="end" font-family="Liberation Sans" font-size="11.5" fill="#5a5a55">10000</text><text x="866.5" y="450.8" text-anchor="end" font-family="Liberation Sans" font-size="11.5" fill="#5a5a55">5000</text><text x="866.5" y="475" text-anchor="end" font-family="Liberation Sans" font-size="11.5" fill="#5a5a55">0</text><line x1="869" y1="349.5" x2="1073" y2="349.5" stroke="#e2e2e4" stroke-width="1.1"/><line x1="869" y1="373.5" x2="1073" y2="373.5" stroke="#e2e2e4" stroke-width="1.1"/><line x1="869" y1="397.5" x2="1073" y2="397.5" stroke="#e2e2e4" stroke-width="1.1"/><line x1="869" y1="421.5" x2="1073" y2="421.5" stroke="#e2e2e4" stroke-width="1.1"/><line x1="869" y1="445.5" x2="1073" y2="445.5" stroke="#e2e2e4" stroke-width="1.1"/><rect x="869.5" y="324.5" width="204" height="146" fill="none" stroke="#5b5a57" stroke-width="1"/><polyline points="980.1,470.0 982.134,470.0 984.168,470.0 986.202,470.0 988.236,470.0 990.27,470.0 992.304,470.0 994.338,470.0 996.3720000000001,470.0 998.4060000000001,463.67333333333335 1000.44,470.0 1002.474,470.0 1004.508,470.0 1006.542,470.0 1008.576,470.0 1010.61,470.0 1012.644,470.0 1014.678,470.0 1016.712,470.0 1018.746,470.0 1020.78,470.0 1022.8140000000001,470.0 1024.848,470.0 1026.882,470.0 1028.916,470.0 1030.95,470.0 1032.984,470.0 1035.018,470.0 1037.0520000000001,470.0 1039.086,470.0 1041.1200000000001,470.0 1043.154,470.0 1045.188,470.0 1047.222,470.0 1049.256,470.0 1051.29,470.0 1053.324,470.0 1055.358,470.0 1057.392,470.0 1059.426,470.0 1061.46,470.0 1063.494,470.0 1065.528,470.0 1067.562,470.0 1069.596,470.0 1071.63,470.0 1073.664,470.0" fill="none" stroke="#0f9af6" stroke-width="2" stroke-linejoin="round"/><polyline points="980.1,470.0 982.134,470.0 984.168,404.78666666666663 986.202,470.0 988.236,470.0 990.27,470.0 992.304,470.0 994.338,470.0 996.3720000000001,470.0 998.4060000000001,334.22 1000.44,470.0 1002.474,470.0 1004.508,470.0 1006.542,470.0 1008.576,377.5333333333333 1010.61,470.0 1012.644,470.0 1014.678,470.0 1016.712,470.0 1018.746,470.0 1020.78,470.0 1022.8140000000001,470.0 1024.848,470.0 1026.882,470.0 1028.916,470.0 1030.95,470.0 1032.984,470.0 1035.018,470.0 1037.0520000000001,470.0 1039.086,470.0 1041.1200000000001,470.0 1043.154,470.0 1045.188,470.0 1047.222,470.0 1049.256,470.0 1051.29,470.0 1053.324,470.0 1055.358,470.0 1057.392,470.0 1059.426,468.05333333333334 1061.46,470.0 1063.494,470.0 1065.528,470.0 1067.562,470.0 1069.596,470.0 1071.63,470.0 1073.664,470.0" fill="none" stroke="#a6e800" stroke-width="2" stroke-linejoin="round"/><rect x="875.5" y="330.5" width="68" height="35" fill="#ccdbf2" fill-opacity="0.92" stroke="#d4d4d4" stroke-width="1"/><rect x="877.5" y="334.5" width="16" height="12" fill="#d0d8e4" stroke="#c8c8c8" stroke-width="1"/><rect x="878" y="335" width="15" height="11" fill="#0f9af6"/><text x="893.5" y="343.8" font-family="Liberation Sans" font-size="11.6" fill="#626262">Fetched</text><rect x="877.5" y="351.5" width="16" height="12" fill="#d0d8e4" stroke="#c8c8c8" stroke-width="1"/><rect x="878" y="352" width="15" height="11" fill="#a6e800"/><text x="893.5" y="360.8" font-family="Liberation Sans" font-size="11.6" fill="#626262">Returned</text><text x="1134.5" y="330" text-anchor="end" font-family="Liberation Sans" font-size="11.5" fill="#5a5a55">2500</text><text x="1134.5" y="359" text-anchor="end" font-family="Liberation Sans" font-size="11.5" fill="#5a5a55">2000</text><text x="1134.5" y="388" text-anchor="end" font-family="Liberation Sans" font-size="11.5" fill="#5a5a55">1500</text><text x="1134.5" y="417" text-anchor="end" font-family="Liberation Sans" font-size="11.5" fill="#5a5a55">1000</text><text x="1134.5" y="446" text-anchor="end" font-family="Liberation Sans" font-size="11.5" fill="#5a5a55">500</text><text x="1134.5" y="475" text-anchor="end" font-family="Liberation Sans" font-size="11.5" fill="#5a5a55">0</text><line x1="1137" y1="354.5" x2="1348" y2="354.5" stroke="#e2e2e4" stroke-width="1.1"/><line x1="1137" y1="383.5" x2="1348" y2="383.5" stroke="#e2e2e4" stroke-width="1.1"/><line x1="1137" y1="412.5" x2="1348" y2="412.5" stroke="#e2e2e4" stroke-width="1.1"/><line x1="1137" y1="441.5" x2="1348" y2="441.5" stroke="#e2e2e4" stroke-width="1.1"/><rect x="1137.5" y="324.5" width="211" height="146" fill="none" stroke="#5b5a57" stroke-width="1"/><polyline points="1251.8,470 1348,470" fill="none" stroke="#0f9af6" stroke-width="2" stroke-linejoin="round"/><polyline points="1251.8,470.0 1253.8999999999999,470.0 1256.0,455.692 1258.1,470.0 1260.2,470.0 1262.3,470.0 1264.3999999999999,470.0 1266.5,468.0144 1268.6,470.0 1270.7,327.67920000000004 1272.8,470.0 1274.8999999999999,467.0216 1277.0,470.0 1279.1,470.0 1281.2,423.3968 1283.3,470.0 1285.3999999999999,470.0 1287.5,470.0 1289.6,470.0 1291.7,470.0 1293.8,470.0 1295.8999999999999,470.0 1298.0,470.0 1300.1,470.0 1302.2,470.0 1304.3,470.0 1306.3999999999999,470.0 1308.5,470.0 1310.6,470.0 1312.7,470.0 1314.8,470.0 1316.8999999999999,470.0 1319.0,470.0 1321.1,470.0 1323.2,470.0 1325.3,470.0 1327.3999999999999,470.0 1329.5,470.0 1331.6,470.0 1333.7,463.4008 1335.8,470.0 1337.8999999999999,470.0 1340.0,470.0 1342.1,470.0 1344.2,470.0 1346.3,470.0 1348.3999999999999,470.0" fill="none" stroke="#a6e800" stroke-width="2" stroke-linejoin="round"/><rect x="1143.5" y="330.5" width="51" height="35" fill="#ccdbf2" fill-opacity="0.92" stroke="#d4d4d4" stroke-width="1"/><rect x="1145.5" y="334.5" width="16" height="12" fill="#d0d8e4" stroke="#c8c8c8" stroke-width="1"/><rect x="1146" y="335" width="15" height="11" fill="#0f9af6"/><text x="1161.5" y="343.8" font-family="Liberation Sans" font-size="11.6" fill="#626262">Reads</text><rect x="1145.5" y="351.5" width="16" height="12" fill="#d0d8e4" stroke="#c8c8c8" stroke-width="1"/><rect x="1146" y="352" width="15" height="11" fill="#a6e800"/><text x="1161.5" y="360.8" font-family="Liberation Sans" font-size="11.6" fill="#626262">Hits</text></svg><div class="abs" style="left:550px;top:487px;width:809px;height:173px;border:1px solid #d9dae2;border-radius:5px 5px 1.5px 1.5px;background:#4a4c58;overflow:hidden"><div class="abs" style="left:0;top:0;width:807px;height:29px;background:#212423;border-bottom:0"></div><div class="abs" style="left:0;top:29px;width:807px;height:1px;background:#d9dae2"></div></div><div class="t" style="left:559px;top:495px;font-size:14px;letter-spacing:0.1px;font-weight:700;color:#ffffff">Server activity</div><div class="abs" style="left:551px;top:518px;width:806px;height:33px;background:#212322"></div><div class="abs" style="left:551px;top:551px;width:806px;height:107px;background:#2a2a2a;border-radius:0 0 1px 1px"></div><div class="t" style="left:560px;top:527px;font-size:14px;color:#92959b">Sessions</div><div class="t" style="left:634px;top:527px;font-size:14px;color:#f2f2f2">Locks</div><div class="t" style="left:690px;top:527px;font-size:14px;color:#92959b">Prepared Transactions</div><div class="abs" style="left:624px;top:547px;width:56px;height:3px;background:#7eb0ec"></div><div class="abs" style="left:1160px;top:518px;width:197px;height:32px;background:#ffffff;border-left:1px solid #dde0e6"></div><div class="abs" style="left:1320px;top:518px;width:1px;height:32px;background:#d6dae2"></div><svg class="abs" style="left:1172px;top:526px" width="15" height="15" viewBox="0 0 15 15"><circle cx="6" cy="6" r="4.3" fill="none" stroke="#222" stroke-width="2"/><path d="M9.2 9.2 L13 13" stroke="#222" stroke-width="2.2" stroke-linecap="round"/></svg><div class="t" style="left:1207.5px;top:526.4px;font-size:14px;color:#8893a8">Search</div><svg class="abs" style="left:1332px;top:526px" width="15" height="14" viewBox="0 0 15 14"><path d="M12.3 5 A5.3 5.3 0 0 0 2.6 4.6" fill="none" stroke="#222" stroke-width="2"/><path d="M2.7 9 A5.3 5.3 0 0 0 12.4 9.4" fill="none" stroke="#222" stroke-width="2"/><path d="M9.5 5.5 L14 5.5 L14 1 Z" fill="#222"/><path d="M5.5 8.5 L1 8.5 L1 13 Z" fill="#222"/></svg><div class="abs" style="left:559px;top:558px;width:791px;height:93px;border:1px solid #d9dae2;border-radius:4px;overflow:hidden;background:#f0f0f0"><div class="abs" style="left:0;top:0;width:789px;height:45px;background:#424244"></div><div class="abs" style="left:0;top:45px;width:789px;height:1px;background:#d9dae2"></div><div class="abs" style="left:0;top:46px;width:789px;height:30px;background:#222222"></div><div class="abs" style="left:0;top:76px;width:789px;height:1px;background:#d9dae2"></div><div class="abs" style="left:48px;top:0;width:1px;height:76px;background:#d9dae2"></div><div class="abs" style="left:128px;top:0;width:1px;height:76px;background:#d9dae2"></div><div class="abs" style="left:242px;top:0;width:1px;height:76px;background:#d9dae2"></div><div class="abs" style="left:288px;top:0;width:1px;height:76px;background:#d9dae2"></div><div class="abs" style="left:339px;top:0;width:1px;height:76px;background:#d9dae2"></div><div class="abs" style="left:440px;top:0;width:1px;height:76px;background:#d9dae2"></div><div class="abs" style="left:533px;top:0;width:1px;height:76px;background:#d9dae2"></div><div class="abs" style="left:582px;top:0;width:1px;height:76px;background:#d9dae2"></div><div class="abs" style="left:659px;top:0;width:1px;height:76px;background:#d9dae2"></div><div class="abs" style="left:760px;top:0;width:1px;height:76px;background:#d9dae2"></div><div class="abs" style="left:15px;top:78px;width:630px;height:11px;background:#c1c1c1"></div><svg class="abs" style="left:4px;top:79px" width="6" height="9" viewBox="0 0 6 9"><path d="M5.5 0.5 L0.5 4.5 L5.5 8.5 Z" fill="#a0a0a0"/></svg><svg class="abs" style="left:779px;top:80px" width="6" height="8" viewBox="0 0 6 8"><path d="M1 0.5 L5 4 L1 7.5 Z" fill="#505050"/></svg></div><div class="abs" style="left:1321px;top:559px;width:28px;height:76px;overflow:hidden"><div class="t" style="left:4px;top:15px;font-size:14px;font-weight:700;color:#f4f4f4">Mode</div><div class="t" style="left:4px;top:53px;font-size:14px;color:#e8e8e8">AccessShareLock</div></div><div class="t" style="left:564px;top:574px;font-size:14px;letter-spacing:0.25px;font-weight:700;color:#f4f4f4">PID</div><div class="t" style="left:564px;top:612px;font-size:14px;color:#e8e8e8">21779</div><div class="t" style="left:613px;top:574px;font-size:14px;letter-spacing:0.25px;font-weight:700;color:#f4f4f4">Lock type</div><div class="t" style="left:613px;top:612px;font-size:14px;color:#e8e8e8">relation</div><div class="t" style="left:693px;top:574px;font-size:14px;letter-spacing:0.25px;font-weight:700;color:#f4f4f4">Target relation</div><div class="t" style="left:693px;top:612px;font-size:14px;color:#e8e8e8">pg_locks</div><div class="t" style="left:807px;top:574px;font-size:14px;letter-spacing:0.25px;font-weight:700;color:#f4f4f4">Page</div><div class="t" style="left:853px;top:574px;font-size:14px;letter-spacing:0.25px;font-weight:700;color:#f4f4f4">Tuple</div><div class="t" style="left:904px;top:574px;font-size:14px;letter-spacing:0.25px;font-weight:700;color:#f4f4f4">vXID (target)</div><div class="t" style="left:1005px;top:574px;font-size:14px;letter-spacing:0.25px;font-weight:700;color:#f4f4f4">XID (target)</div><div class="t" style="left:1098px;top:574px;font-size:14px;letter-spacing:0.25px;font-weight:700;color:#f4f4f4">Class</div><div class="t" style="left:1147px;top:574px;font-size:14px;letter-spacing:0.25px;font-weight:700;color:#f4f4f4">Object ID</div><div class="t" style="left:1224px;top:574px;font-size:14px;letter-spacing:0.25px;font-weight:700;color:#f4f4f4">vXID (owner)</div><div class="t" style="left:1224px;top:612px;font-size:14px;color:#e8e8e8">4/7967</div></body></html>
